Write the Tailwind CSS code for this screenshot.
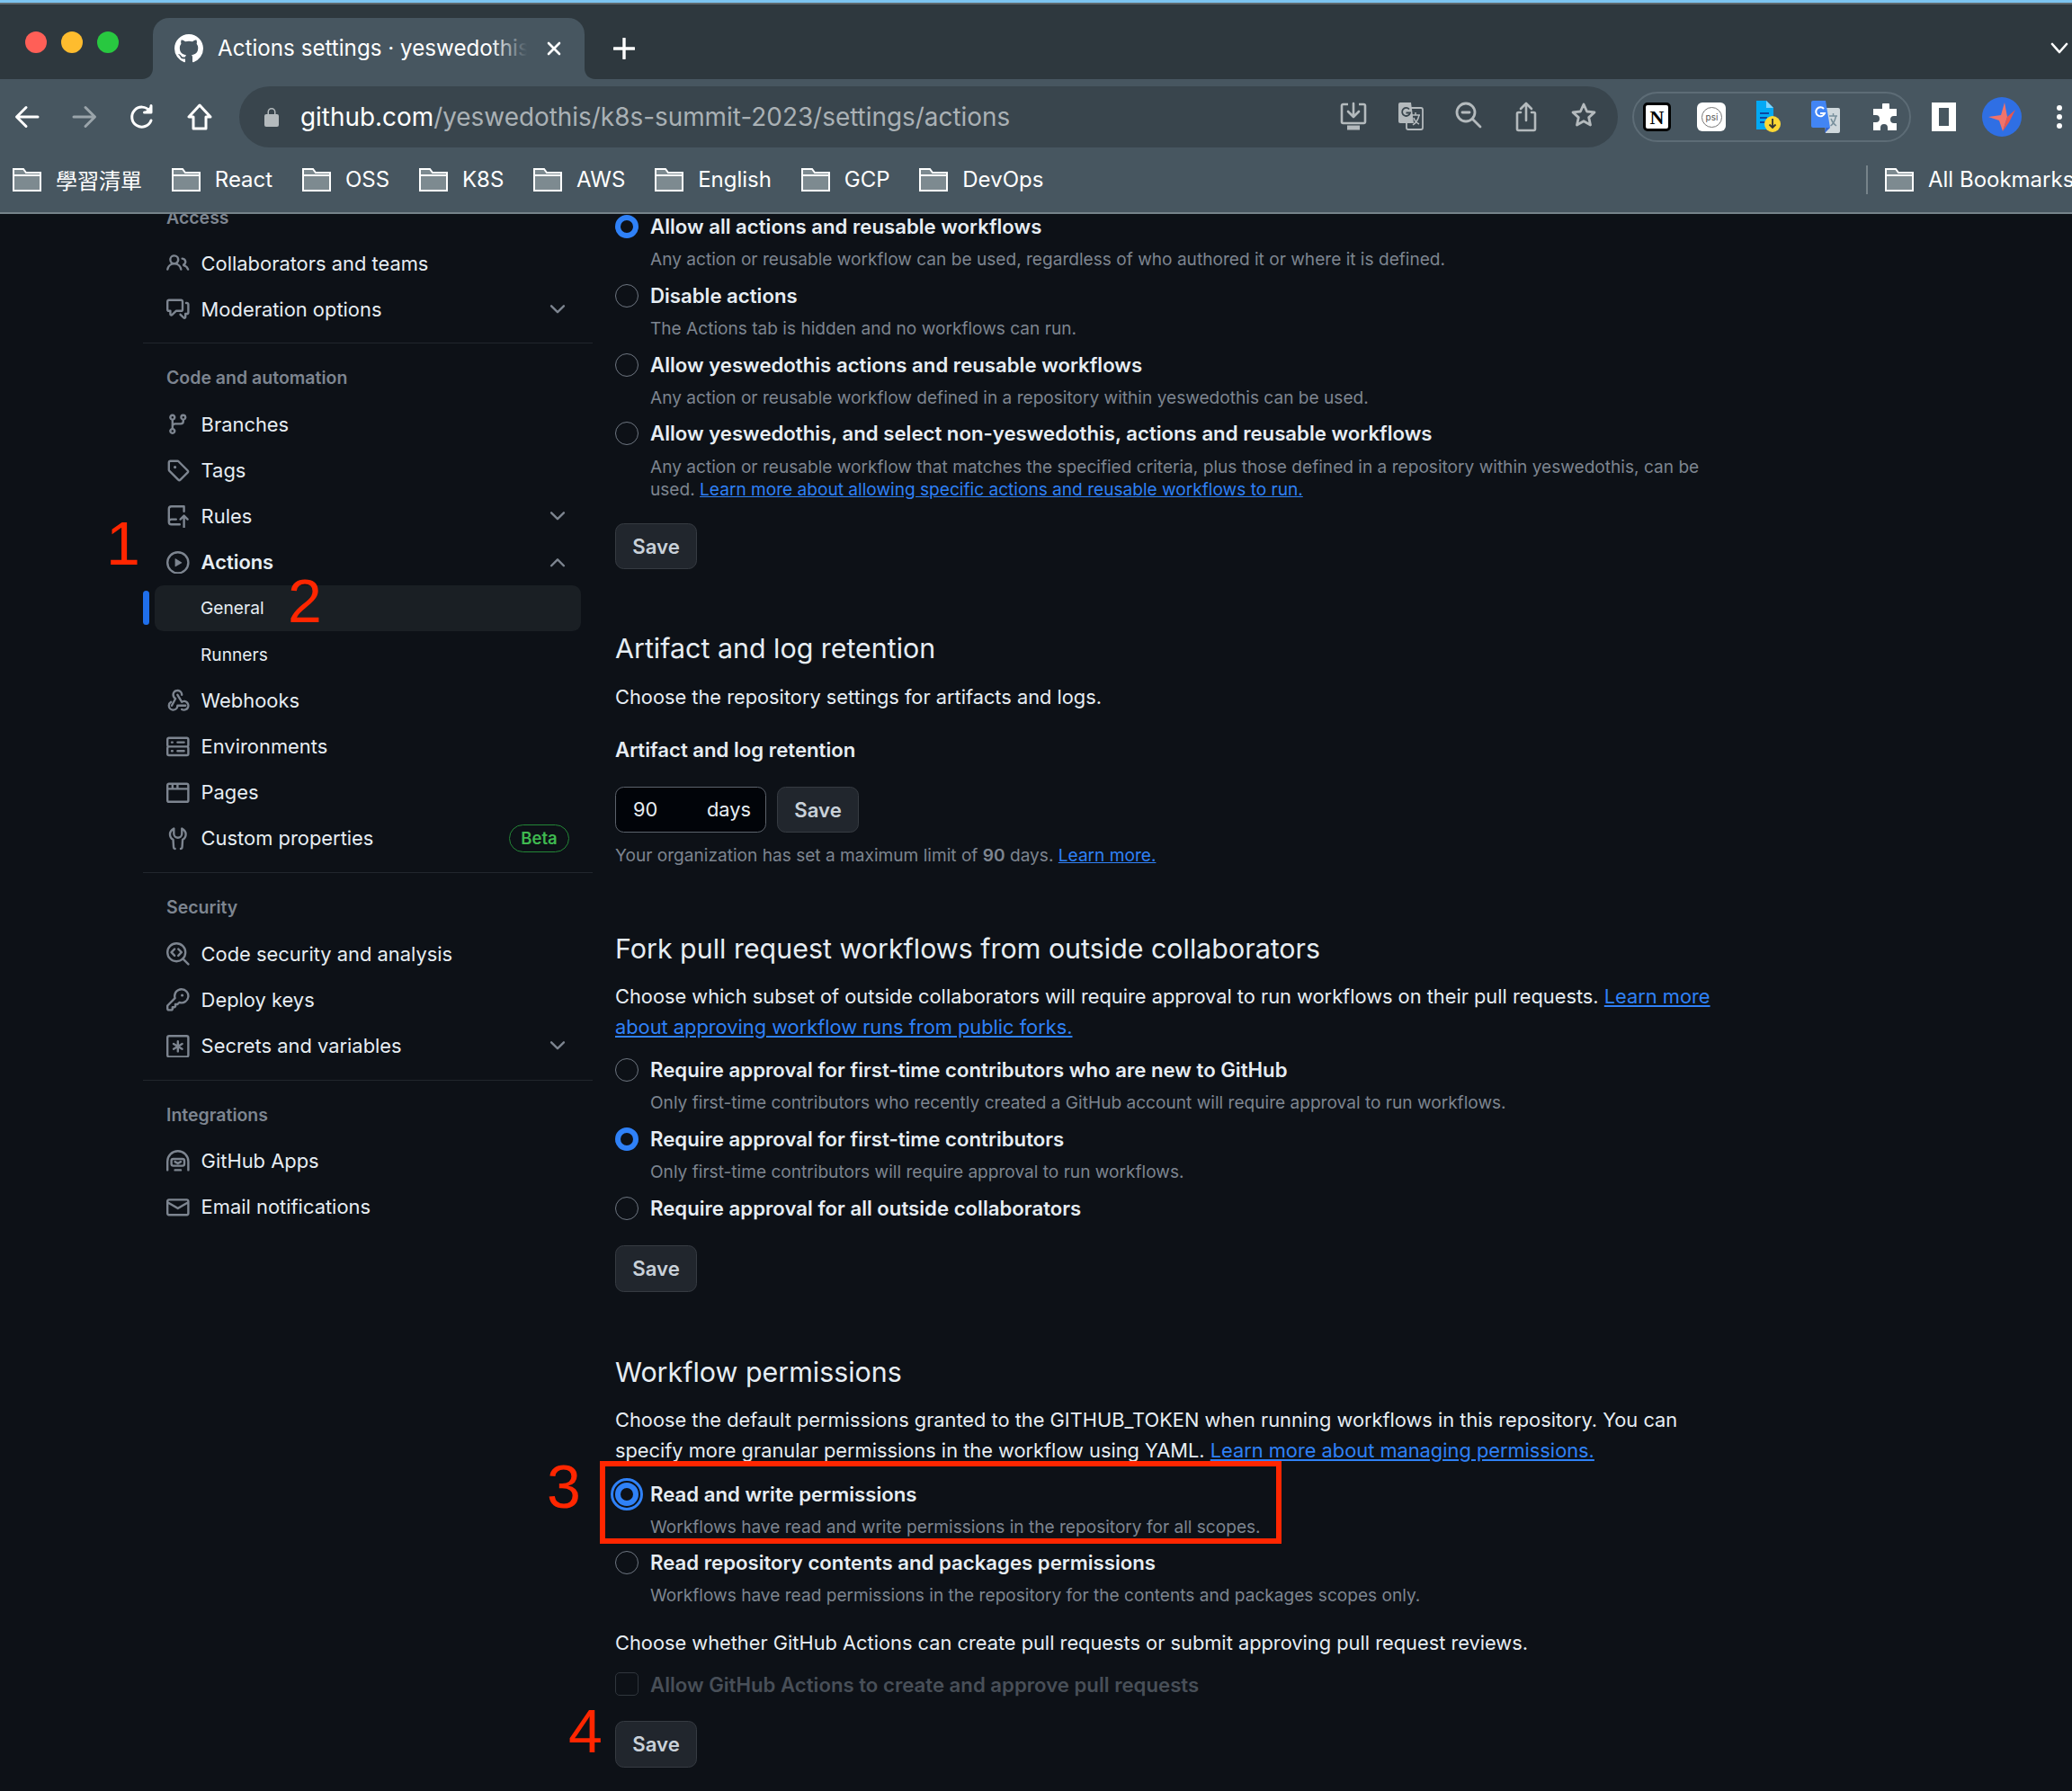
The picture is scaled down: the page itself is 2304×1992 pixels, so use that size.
<!DOCTYPE html>
<html lang="en">
<head>
    <meta charset="UTF-8">
    <title>Actions settings</title>
    <script src="https://cdn.jsdelivr.net/npm/@tailwindcss/browser@4"></script>
</head>
<body class="bg-[#0d1117]">
<div class="relative w-[2304px] h-[1992px] overflow-hidden font-['Inter','Noto_Sans_CJK_TC',sans-serif] text-[#e6edf3]">

    <!-- browser chrome -->
    <header class="relative z-10 h-[238px] bg-[#475660] border-b-2 border-[#76838a]">
        <div class="h-[3px] bg-[#7cc4f0]"></div>
        <div class="h-[2px] bg-[#5d676c]"></div>

        <!-- tab strip -->
        <div class="h-[83px] bg-[#2e383e] flex relative">
            <div class="flex items-center gap-[16px] pl-[28px] h-[83px] w-[170px]">
                <span class="w-[24px] h-[24px] rounded-full bg-[#ff5f57]"></span>
                <span class="w-[24px] h-[24px] rounded-full bg-[#febc2e]"></span>
                <span class="w-[24px] h-[24px] rounded-full bg-[#28c840]"></span>
            </div>
            <div class="relative mt-[15px] w-[480px] h-[68px] bg-[#475660] rounded-t-[18px] flex items-center pl-[24px]">
                <svg class="absolute left-[-12px] bottom-0 w-[12px] h-[12px]" viewBox="0 0 12 12"><path d="M12 0v12H0C7 12 12 7 12 0Z" fill="#475660"/></svg>
                <svg class="absolute right-[-12px] bottom-0 w-[12px] h-[12px]" viewBox="0 0 12 12"><path d="M0 0v12h12C5 12 0 7 0 0Z" fill="#475660"/></svg>
                <svg class="w-[32px] h-[32px] shrink-0" viewBox="0 0 16 16" fill="#ffffff"><path d="M8 0c4.42 0 8 3.58 8 8a8.013 8.013 0 0 1-5.45 7.59c-.4.08-.55-.17-.55-.38 0-.27.01-1.13.01-2.2 0-.75-.25-1.23-.54-1.48 1.78-.2 3.65-.88 3.65-3.95 0-.88-.31-1.59-.82-2.15.08-.2.36-1.02-.08-2.12 0 0-.67-.22-2.2.82-.64-.18-1.32-.27-2-.27-.68 0-1.36.09-2 .27-1.53-1.03-2.2-.82-2.2-.82-.44 1.1-.16 1.92-.08 2.12-.51.56-.82 1.28-.82 2.15 0 3.06 1.86 3.75 3.64 3.95-.23.2-.44.55-.51 1.07-.46.21-1.61.55-2.33-.66-.15-.24-.6-.83-1.23-.82-.67.01-.27.38.01.53.34.19.73.9.82 1.13.16.45.68 1.31 2.69.94 0 .67.01 1.3.01 1.49 0 .21-.15.45-.55.38A7.995 7.995 0 0 1 0 8c0-4.42 3.58-8 8-8Z"/></svg>
                <div class="relative ml-[16px] w-[344px] overflow-hidden whitespace-nowrap text-[24.200px] text-white">Actions settings · yeswedothis<span class="absolute right-0 top-0 w-[40px] h-full bg-linear-to-r from-transparent to-[#475660]"></span></div>
                <svg class="ml-[20px] w-[20px] h-[20px] shrink-0" viewBox="0 0 20 20" stroke="#ffffff" stroke-width="2.6" stroke-linecap="round"><path d="M4 4l12 12M16 4L4 16"/></svg>
            </div>
            <svg class="ml-[32px] mt-[37px] w-[24px] h-[24px]" viewBox="0 0 24 24" stroke="#ffffff" stroke-width="3.4" stroke-linecap="round"><path d="M12 1v22M1 12h22"/></svg>
            <svg class="ml-auto mr-[4px] mt-[42px] w-[20px] h-[14px]" viewBox="0 0 20 14" fill="none" stroke="#ffffff" stroke-width="2.6" stroke-linecap="round" stroke-linejoin="round"><path d="M2 2l8 9 8-9"/></svg>
        </div>

        <!-- address row -->
        <div class="h-[84px] pt-[8px] flex">
            <div class="flex ml-[-2px] h-[68px]">
                <div class="w-[64px] flex items-center justify-center"><svg class="w-[28px] h-[28px]" viewBox="0 0 28 28" fill="none" stroke="#ffffff" stroke-width="3" stroke-linecap="round" stroke-linejoin="round"><path d="M26 14H3M13 3.5 2.5 14 13 24.5"/></svg></div>
                <div class="w-[64px] flex items-center justify-center"><svg class="w-[28px] h-[28px]" viewBox="0 0 28 28" fill="none" stroke="#9aa4aa" stroke-width="3" stroke-linecap="round" stroke-linejoin="round"><path d="M2 14h23M15 3.5 25.5 14 15 24.5"/></svg></div>
                <div class="w-[64px] flex items-center justify-center"><svg class="w-[30px] h-[30px]" viewBox="0 0 30 30" fill="none" stroke="#ffffff" stroke-width="3" stroke-linecap="round" stroke-linejoin="round"><path d="M25 19a11 11 0 1 1-1.5-10.5"/><path d="M25 2.5v7.5h-7.5" fill="#ffffff"/></svg></div>
                <div class="w-[64px] flex items-center justify-center"><svg class="w-[28px] h-[30px]" viewBox="0 0 28 30" fill="none" stroke="#ffffff" stroke-width="3" stroke-linejoin="round"><path d="M14 2 2 15h5v13h14V15h5Z"/></svg></div>
            </div>
            <div class="ml-[12px] w-[1533px] h-[68px] rounded-full bg-[#39454d] flex items-center">
                <svg class="ml-[28px] w-[16px] h-[22px] shrink-0" viewBox="0 0 16 22" fill="#b4babd"><path d="M3.5 8V5.5a4.5 4.5 0 0 1 9 0V8H11V5.5a3 3 0 0 0-6 0V8Z"/><rect y="8" width="16" height="14" rx="2"/></svg>
                <div class="ml-[24px] pt-[2px] text-[27.900px] whitespace-nowrap text-[#aab1b5]"><span class="text-white">github.com</span>/yeswedothis/k8s-summit-2023/settings/actions</div>
                <div class="ml-auto mr-[6px] flex">
                    <div class="w-[64px] flex justify-center"><svg class="w-[30px] h-[32px]" viewBox="0 0 30 32" fill="none" stroke="#b4babd" stroke-width="2.6"><path d="M9 3H3.5A1.5 1.5 0 0 0 2 4.5v18A1.5 1.5 0 0 0 3.5 24h23a1.5 1.5 0 0 0 1.5-1.500V4.500A1.500 1.500 0 0 0 26.500 3H21"/><path d="M15 2v14M9 11l6 6 6-6" stroke-linecap="round" stroke-linejoin="round"/><path d="M8 29h14" stroke-width="5"/></svg></div>
                    <div class="w-[64px] flex justify-center"><svg class="w-[28px] h-[32px]" viewBox="0 0 28 32"><rect x="9" y="7" width="18" height="24" rx="2" fill="none" stroke="#b4babd" stroke-width="1.800"/><path d="M2 1h12l3 23H2a2 2 0 0 1-2-2V3a2 2 0 0 1 2-2Z" fill="#b4babd"/><path d="M12 8.500a4.500 4.500 0 1 0 1 4H8.500" fill="none" stroke="#39454d" stroke-width="1.800"/><path d="M15 15h9M19 12v3M23 15c-1 5-4 9-7 11M17 18c1 3 4 6 6 7" fill="none" stroke="#b4babd" stroke-width="1.500"/></svg></div>
                    <div class="w-[64px] flex justify-center"><svg class="w-[30px] h-[30px]" viewBox="0 0 30 30" fill="none" stroke="#b4babd" stroke-width="2.800" stroke-linecap="round"><circle cx="12" cy="12" r="10"/><path d="M8 12h8M20 20l8 8"/></svg></div>
                    <div class="w-[64px] flex justify-center"><svg class="w-[24px] h-[34px]" viewBox="0 0 24 34" fill="none" stroke="#b4babd" stroke-width="2.600" stroke-linecap="round" stroke-linejoin="round"><path d="M6 12H3.500A1.500 1.500 0 0 0 2 13.500v17A1.500 1.500 0 0 0 3.500 32h17a1.500 1.500 0 0 0 1.500-1.500v-17a1.500 1.500 0 0 0-1.500-1.500H18"/><path d="M12 21V2M6 8l6-6 6 6"/></svg></div>
                    <div class="w-[64px] flex justify-center"><svg class="w-[30px] h-[30px]" viewBox="0 0 30 30" fill="none" stroke="#b4babd" stroke-width="2.800" stroke-linejoin="round"><path d="m15 3 3.600 8 8.400.9-6.300 5.700 1.800 8.400L15 21.700 7.500 26l1.800-8.400L3 11.900l8.400-.9Z"/></svg></div>
                </div>
            </div>

            <!-- extensions -->
            <div class="ml-[16px] mt-[6px] w-[310px] h-[56px] rounded-full border-2 border-[#5d6c76] flex items-center">
                <div class="ml-[-5px] w-[62px] flex justify-center"><div class="w-[31px] h-[32px] bg-white border-[3px] border-black rounded-[5px] flex items-center justify-center font-['Liberation_Serif',serif] font-bold text-[22px] text-black">N</div></div>
                <div class="w-[62px] flex justify-center"><div class="w-[32px] h-[32px] bg-white rounded-[6px] flex items-center justify-center"><div class="w-[23px] h-[23px] rounded-full border border-[#777777] flex items-center justify-center text-[10px] text-[#555555]">psi</div></div></div>
                <div class="w-[66px] flex justify-center"><svg class="w-[30px] h-[36px]" viewBox="0 0 30 36"><path d="M2 0h11l8 8v24H2Z" fill="#03a9f4"/><path d="M13 0l8 8h-8Z" fill="#81d4fa"/><path d="M6 14h10M6 19h8M6 24h6" stroke="#0d47a1" stroke-width="2"/><circle cx="20" cy="26" r="9" fill="#fdd835"/><path d="M20 20v10M16.500 26.500l3.500 3.500 3.500-3.500" fill="none" stroke="#333333" stroke-width="1.800"/></svg></div>
                <div class="w-[64px] flex justify-center"><svg class="w-[32px] h-[36px]" viewBox="0 0 32 36"><path d="M14 8h16a2 2 0 0 1 2 2v24a2 2 0 0 1-2 2H16Z" fill="#cfd8dc"/><path d="M2 0h14l5 30H2a2 2 0 0 1-2-2V2a2 2 0 0 1 2-2Z" fill="#4285f4"/><path d="M16 30h5l-6 6Z" fill="#3367d6"/><path d="M14 9a5 5 0 1 0 1 5H10" fill="none" stroke="#ffffff" stroke-width="2"/><path d="M20 17h9M24.500 14v3M27.500 17c-1 5-3 9-6 11M22 20c1 3 3 6 6 8" fill="none" stroke="#78909c" stroke-width="1.500"/></svg></div>
                <div class="ml-[10px] w-[52px] flex justify-center"><svg class="w-[28px] h-[30px]" viewBox="0 0 28 30" fill="#ffffff"><path d="M10 2a4 4 0 0 1 8 0v4h8v8h-3a4 4 0 0 0 0 8h3v8H16v-3a4 4 0 0 0-8 0v3H0v-9h3a4 4 0 0 0 0-8H0V6h10Z"/></svg></div>
            </div>
            <div class="ml-[23px] mt-[18px] w-[27px] h-[32px] border-[6px] border-white border-r-[8px] border-l-[8px] bg-[#475660]"></div>
            <div class="ml-[29px] mt-[12px] w-[44px] h-[44px] rounded-full bg-[#2f6fe4] flex items-center justify-center"><svg class="w-[34px] h-[36px]" viewBox="0 0 34 36"><path d="M20 2l3 16-5 16-4-12L2 18l14-2Z" fill="#f0736a"/><path d="M23 18l9-8-7 14-7 10Z" fill="#e8564e"/></svg></div>
            <div class="ml-[39px] mt-[21px] flex flex-col gap-[4px]"><span class="w-[6px] h-[6px] rounded-full bg-white"></span><span class="w-[6px] h-[6px] rounded-full bg-white"></span><span class="w-[6px] h-[6px] rounded-full bg-white"></span></div>
        </div>

        <!-- bookmarks -->
        <div class="h-[64px] pb-[8px] flex items-center pl-[14px] text-[24px] text-white whitespace-nowrap gap-[32.800px]">
            <div class="flex items-center gap-[16px]"><svg class="w-[32px] h-[26px]" viewBox="0 0 32 26"><path d="M1 1h11l3 4h16v20H1Z" fill="#7d8a90" stroke="#ffffff" stroke-width="2"/><path d="M1 8h30" stroke="#ffffff" stroke-width="2"/></svg><span class="font-['Noto_Sans_CJK_TC',sans-serif]">學習清單</span></div>
            <div class="flex items-center gap-[16px]"><svg class="w-[32px] h-[26px]" viewBox="0 0 32 26"><path d="M1 1h11l3 4h16v20H1Z" fill="#7d8a90" stroke="#ffffff" stroke-width="2"/><path d="M1 8h30" stroke="#ffffff" stroke-width="2"/></svg>React</div>
            <div class="flex items-center gap-[16px]"><svg class="w-[32px] h-[26px]" viewBox="0 0 32 26"><path d="M1 1h11l3 4h16v20H1Z" fill="#7d8a90" stroke="#ffffff" stroke-width="2"/><path d="M1 8h30" stroke="#ffffff" stroke-width="2"/></svg>OSS</div>
            <div class="flex items-center gap-[16px]"><svg class="w-[32px] h-[26px]" viewBox="0 0 32 26"><path d="M1 1h11l3 4h16v20H1Z" fill="#7d8a90" stroke="#ffffff" stroke-width="2"/><path d="M1 8h30" stroke="#ffffff" stroke-width="2"/></svg>K8S</div>
            <div class="flex items-center gap-[16px]"><svg class="w-[32px] h-[26px]" viewBox="0 0 32 26"><path d="M1 1h11l3 4h16v20H1Z" fill="#7d8a90" stroke="#ffffff" stroke-width="2"/><path d="M1 8h30" stroke="#ffffff" stroke-width="2"/></svg>AWS</div>
            <div class="flex items-center gap-[16px]"><svg class="w-[32px] h-[26px]" viewBox="0 0 32 26"><path d="M1 1h11l3 4h16v20H1Z" fill="#7d8a90" stroke="#ffffff" stroke-width="2"/><path d="M1 8h30" stroke="#ffffff" stroke-width="2"/></svg>English</div>
            <div class="flex items-center gap-[16px]"><svg class="w-[32px] h-[26px]" viewBox="0 0 32 26"><path d="M1 1h11l3 4h16v20H1Z" fill="#7d8a90" stroke="#ffffff" stroke-width="2"/><path d="M1 8h30" stroke="#ffffff" stroke-width="2"/></svg>GCP</div>
            <div class="flex items-center gap-[16px]"><svg class="w-[32px] h-[26px]" viewBox="0 0 32 26"><path d="M1 1h11l3 4h16v20H1Z" fill="#7d8a90" stroke="#ffffff" stroke-width="2"/><path d="M1 8h30" stroke="#ffffff" stroke-width="2"/></svg>DevOps</div>
            <div class="ml-auto flex items-center gap-[16px] w-[229px]">
                <span class="w-[2px] h-[32px] bg-[#76838a] shrink-0 mr-[3px]"></span>
                <svg class="w-[32px] h-[26px] shrink-0" viewBox="0 0 32 26"><path d="M1 1h11l3 4h16v20H1Z" fill="#7d8a90" stroke="#ffffff" stroke-width="2"/><path d="M1 8h30" stroke="#ffffff" stroke-width="2"/></svg>All Bookmarks
            </div>
        </div>
    </header>

    <main class="flex h-[1754px] overflow-hidden">
        <!-- sidebar -->
        <nav class="ml-[159px] w-[500px] shrink-0 mt-[-34.500px] text-[21.900px]">
            <div class="h-[64px] pt-[24px] pl-[26px] leading-[28px] text-[19.500px] font-semibold text-[#7d8590]">Access</div>
            <a class="h-[51.200px] flex items-center pl-[26px] gap-[13px]"><svg class="w-[25.600px] h-[25.600px]" viewBox="0 0 16 16" fill="#7d8590"><path d="M2 5.500a3.500 3.500 0 1 1 5.898 2.549 5.508 5.508 0 0 1 3.034 4.084.75.75 0 1 1-1.482.235 4 4 0 0 0-7.9 0 .75.75 0 0 1-1.482-.236A5.507 5.507 0 0 1 3.102 8.050 3.493 3.493 0 0 1 2 5.500ZM11 4a3.001 3.001 0 0 1 2.220 5.018 5.010 5.010 0 0 1 2.560 3.012.749.749 0 0 1-.885.954.752.752 0 0 1-.549-.514 3.507 3.507 0 0 0-2.522-2.372.75.75 0 0 1-.574-.73v-.352a.75.75 0 0 1 .416-.672A1.500 1.500 0 0 0 11 5.500.75.75 0 0 1 11 4Zm-5.500-.5a2 2 0 1 0-.001 3.999A2 2 0 0 0 5.500 3.500Z"/></svg>Collaborators and teams</a>
            <a class="h-[51.200px] flex items-center pl-[26px] gap-[13px]"><svg class="w-[25.600px] h-[25.600px]" viewBox="0 0 16 16" fill="#7d8590"><path d="M1.750 1h8.500c.966 0 1.750.784 1.750 1.750v5.500A1.750 1.750 0 0 1 10.250 10H7.061l-2.574 2.573A1.458 1.458 0 0 1 2 11.543V10h-.25A1.750 1.750 0 0 1 0 8.250v-5.500C0 1.784.784 1 1.750 1ZM1.500 2.750v5.500c0 .138.112.25.25.25h1a.75.75 0 0 1 .75.75v2.190l2.720-2.720a.749.749 0 0 1 .53-.22h3.500a.25.25 0 0 0 .25-.25v-5.500a.25.25 0 0 0-.25-.25h-8.500a.25.25 0 0 0-.25.25Zm13 2a.25.25 0 0 0-.25-.25h-.5a.75.75 0 0 1 0-1.500h.5c.966 0 1.750.784 1.750 1.750v5.500A1.750 1.750 0 0 1 14.250 12H14v1.543a1.458 1.458 0 0 1-2.487 1.030L9.220 12.280a.749.749 0 0 1 .326-1.275.749.749 0 0 1 .734.215l2.220 2.220v-2.190a.75.75 0 0 1 .75-.75h1a.25.25 0 0 0 .25-.25Z"/></svg>Moderation options<svg class="ml-auto mr-[26px] w-[26px] h-[26px]" viewBox="0 0 16 16" fill="#7d8590"><path d="M12.780 5.220a.749.749 0 0 1 0 1.060l-4.250 4.250a.749.749 0 0 1-1.060 0L3.220 6.280a.749.749 0 1 1 1.060-1.060L8 8.939l3.720-3.719a.749.749 0 0 1 1.060 0Z"/></svg></a>
            <div class="mt-[11px] h-[1.600px] bg-[#21262d]"></div>

            <div class="h-[64px] pt-[24px] pl-[26px] leading-[28px] text-[19.500px] font-semibold text-[#7d8590]">Code and automation</div>
            <a class="h-[51.200px] flex items-center pl-[26px] gap-[13px]"><svg class="w-[25.600px] h-[25.600px]" viewBox="0 0 16 16" fill="#7d8590"><path d="M9.500 3.250a2.250 2.250 0 1 1 3 2.122V6A2.500 2.500 0 0 1 10 8.500H6a1 1 0 0 0-1 1v1.128a2.251 2.251 0 1 1-1.500 0V5.372a2.250 2.250 0 1 1 1.500 0v1.836A2.493 2.493 0 0 1 6 7h4a1 1 0 0 0 1-1v-.628A2.250 2.250 0 0 1 9.500 3.250Zm-6 0a.75.75 0 1 0 1.500 0 .75.75 0 0 0-1.500 0Zm8.250-.75a.75.75 0 1 0 0 1.500.75.75 0 0 0 0-1.500ZM4.250 12a.75.75 0 1 0 0 1.500.75.75 0 0 0 0-1.500Z"/></svg>Branches</a>
            <a class="h-[51.200px] flex items-center pl-[26px] gap-[13px]"><svg class="w-[25.600px] h-[25.600px]" viewBox="0 0 16 16" fill="#7d8590"><path d="M1 7.775V2.750C1 1.784 1.784 1 2.750 1h5.025c.464 0 .91.184 1.238.513l6.250 6.250a1.750 1.750 0 0 1 0 2.474l-5.026 5.026a1.750 1.750 0 0 1-2.474 0l-6.250-6.250A1.752 1.752 0 0 1 1 7.775Zm1.500 0c0 .066.026.13.073.177l6.250 6.250a.25.25 0 0 0 .354 0l5.025-5.025a.25.25 0 0 0 0-.354l-6.250-6.250a.25.25 0 0 0-.177-.073H2.750a.25.25 0 0 0-.25.25ZM6 5a1 1 0 1 1 0 2 1 1 0 0 1 0-2Z"/></svg>Tags</a>
            <a class="h-[51.200px] flex items-center pl-[26px] gap-[13px]"><svg class="w-[25.600px] h-[25.600px]" viewBox="0 0 16 16" fill="#7d8590"><path d="M1 2.500A2.500 2.500 0 0 1 3.500 0h8.750a.75.75 0 0 1 .75.75v3.500a.75.75 0 0 1-1.500 0V1.500h-8a1 1 0 0 0-1 1v6.708A2.493 2.493 0 0 1 3.500 9h3.250a.75.75 0 0 1 0 1.500H3.500a1 1 0 0 0 0 2h5.750a.75.75 0 0 1 0 1.500H3.500A2.500 2.500 0 0 1 1 11.500Zm13.230 7.790h-.001l-1.224-1.224v6.184a.75.75 0 0 1-1.500 0V9.066L10.280 10.290a.75.75 0 0 1-1.060-1.061l2.505-2.504a.75.75 0 0 1 1.060 0L15.290 9.230a.751.751 0 0 1-.018 1.042.751.751 0 0 1-1.042.018Z"/></svg>Rules<svg class="ml-auto mr-[26px] w-[26px] h-[26px]" viewBox="0 0 16 16" fill="#7d8590"><path d="M12.780 5.220a.749.749 0 0 1 0 1.060l-4.250 4.250a.749.749 0 0 1-1.060 0L3.220 6.280a.749.749 0 1 1 1.060-1.060L8 8.939l3.720-3.719a.749.749 0 0 1 1.060 0Z"/></svg></a>
            <a class="h-[51.200px] flex items-center pl-[26px] gap-[13px] font-semibold"><svg class="w-[25.600px] h-[25.600px]" viewBox="0 0 16 16" fill="#7d8590"><path d="M8 0a8 8 0 1 1 0 16A8 8 0 0 1 8 0ZM1.500 8a6.500 6.500 0 1 0 13 0 6.500 6.500 0 0 0-13 0Zm4.879-2.773 4.264 2.559a.25.25 0 0 1 0 .428l-4.264 2.559A.25.25 0 0 1 6 10.559V5.442a.25.25 0 0 1 .379-.215Z"/></svg>Actions<svg class="ml-auto mr-[26px] w-[26px] h-[26px]" viewBox="0 0 16 16" fill="#7d8590"><path d="M3.220 10.530a.749.749 0 0 1 0-1.060l4.250-4.250a.749.749 0 0 1 1.060 0l4.250 4.250a.749.749 0 1 1-1.060 1.060L8 6.811 4.280 10.530a.749.749 0 0 1-1.060 0Z"/></svg></a>
            <div class="relative h-[51.200px]">
                <span class="absolute left-0 top-[6px] w-[7px] h-[38px] rounded-full bg-[#1f6feb]"></span>
                <a class="ml-[13px] w-[474px] h-[51.200px] rounded-[9.600px] bg-[#1a1f24] flex items-center pl-[51px] text-[19.200px]">General</a>
            </div>
            <a class="h-[51.200px] flex items-center pl-[64px] text-[19.200px]">Runners</a>
            <a class="h-[51.200px] flex items-center pl-[26px] gap-[13px]"><svg class="w-[25.600px] h-[25.600px]" viewBox="0 0 16 16" fill="#7d8590"><path d="M5.500 4.250a2.250 2.250 0 0 1 4.500 0 .75.75 0 0 0 1.500 0 3.750 3.750 0 1 0-6.140 2.889l-2.272 4.258a.75.75 0 0 0 1.324.706L7 7.250a.75.75 0 0 0-.309-1.015A2.250 2.250 0 0 1 5.500 4.250Z"/><path d="M7.364 3.607a.75.75 0 0 1 1.030.257l2.608 4.349a3.750 3.750 0 1 1-.628 6.785.75.75 0 0 1 .752-1.299 2.250 2.250 0 1 0-.033-3.880.75.75 0 0 1-1.030-.256L7.107 4.636a.75.75 0 0 1 .257-1.030Z"/><path d="M2.500 11.750a2.250 2.250 0 0 0 4.500 0 .75.75 0 0 1 .75-.75h5.500a.75.75 0 0 1 0 1.500H8.425A3.751 3.751 0 0 1 1 11.750a3.750 3.750 0 0 1 1.800-3.200.75.75 0 0 1 .8 1.270 2.250 2.250 0 0 0-1.100 1.930Z"/></svg>Webhooks</a>
            <a class="h-[51.200px] flex items-center pl-[26px] gap-[13px]"><svg class="w-[25.600px] h-[25.600px]" viewBox="0 0 16 16" fill="#7d8590"><path d="M1.750 1h12.500c.966 0 1.750.784 1.750 1.750v4c0 .372-.116.717-.314 1 .198.283.314.628.314 1v4a1.750 1.750 0 0 1-1.750 1.750H1.750A1.750 1.750 0 0 1 0 12.750v-4c0-.372.116-.717.314-1a1.739 1.739 0 0 1-.314-1v-4C0 1.784.784 1 1.750 1ZM1.500 2.750v4c0 .138.112.25.25.25h12.500a.25.25 0 0 0 .25-.25v-4a.25.25 0 0 0-.25-.25H1.750a.25.25 0 0 0-.25.25Zm.25 5.750a.25.25 0 0 0-.25.25v4c0 .138.112.25.25.25h12.500a.25.25 0 0 0 .25-.25v-4a.25.25 0 0 0-.25-.25ZM7 4.750A.75.75 0 0 1 7.750 4h4.500a.75.75 0 0 1 0 1.500h-4.500A.75.75 0 0 1 7 4.750ZM7.750 10h4.500a.75.75 0 0 1 0 1.500h-4.500a.75.75 0 0 1 0-1.500ZM3 4.750A.75.75 0 0 1 3.750 4h.5a.75.75 0 0 1 0 1.500h-.5A.75.75 0 0 1 3 4.750ZM3.750 10h.5a.75.75 0 0 1 0 1.500h-.5a.75.75 0 0 1 0-1.500Z"/></svg>Environments</a>
            <a class="h-[51.200px] flex items-center pl-[26px] gap-[13px]"><svg class="w-[25.600px] h-[25.600px]" viewBox="0 0 16 16" fill="#7d8590"><path d="M0 2.750C0 1.784.784 1 1.750 1h12.500c.966 0 1.750.784 1.750 1.750v10.500A1.750 1.750 0 0 1 14.250 15H1.750A1.750 1.750 0 0 1 0 13.250ZM14.500 6h-13v7.250c0 .138.112.25.25.25h12.500a.25.25 0 0 0 .25-.25Zm-6-3.500v2h6v-1.750a.25.25 0 0 0-.25-.25ZM5 2.500v2h2v-2Zm-3.250 0a.25.25 0 0 0-.25.25V4.500h2v-2Z"/></svg>Pages</a>
            <a class="h-[51.200px] flex items-center pl-[26px] gap-[13px]"><svg class="w-[25.600px] h-[25.600px]" viewBox="0 0 16 16" fill="none" stroke="#7d8590" stroke-width="1.500" stroke-linecap="round" stroke-linejoin="round"><path d="M5.200 1C3.700 1.800 2.500 3.300 2.500 5c0 1.700.9 3 2.200 3.700l.3 4.800c0 .9.4 1.500 1 1.500M10.800 1c1.500.8 2.700 2.300 2.700 4 0 1.700-.9 3-2.200 3.700l-.3 4.800c0 .9-.4 1.500-1 1.500M5.200 1v3.500a2.800 2.800 0 0 0 5.600 0V1"/></svg>Custom properties<span class="ml-auto mr-[26px] w-[67px] h-[31px] rounded-full border-[1.600px] border-[#238636] text-[#3fb950] text-[18.500px] font-semibold flex items-center justify-center">Beta</span></a>
            <div class="mt-[11.500px] h-[1.600px] bg-[#21262d]"></div>

            <div class="h-[64px] pt-[24px] pl-[26px] leading-[28px] text-[19.500px] font-semibold text-[#7d8590]">Security</div>
            <a class="h-[51.200px] flex items-center pl-[26px] gap-[13px]"><svg class="w-[25.600px] h-[25.600px]" viewBox="0 0 16 16" fill="none" stroke="#7d8590" stroke-width="1.500" stroke-linecap="round" stroke-linejoin="round"><circle cx="7" cy="7" r="6.250"/><path d="M11.500 11.500l3.750 3.750M5.700 4.700 3.500 7l2.200 2.300M8.300 4.700 10.500 7 8.300 9.300"/></svg>Code security and analysis</a>
            <a class="h-[51.200px] flex items-center pl-[26px] gap-[13px]"><svg class="w-[25.600px] h-[25.600px]" viewBox="0 0 16 16" fill="#7d8590"><path d="M10.500 0a5.499 5.499 0 1 1-1.288 10.848l-.932.932a.749.749 0 0 1-.53.22H7v.75a.749.749 0 0 1-.22.53l-.5.5a.749.749 0 0 1-.53.22H5v.75a.749.749 0 0 1-.22.53l-.5.5a.749.749 0 0 1-.53.22h-2A1.750 1.750 0 0 1 0 14.250v-2c0-.199.079-.389.22-.53l4.932-4.932A5.500 5.500 0 0 1 10.500 0Zm-4 5.500c-.001.431.069.86.205 1.269a.75.75 0 0 1-.181.768L1.500 12.560v1.690c0 .138.112.25.25.25h1.690l.06-.06v-1.190a.75.75 0 0 1 .75-.75h1.190l.06-.06v-1.190a.75.75 0 0 1 .75-.75h1.190l1.023-1.025a.75.75 0 0 1 .768-.18A4 4 0 1 0 6.500 5.500ZM11 6a1 1 0 1 1 0-2 1 1 0 0 1 0 2Z"/></svg>Deploy keys</a>
            <a class="h-[51.200px] flex items-center pl-[26px] gap-[13px]"><svg class="w-[25.600px] h-[25.600px]" viewBox="0 0 16 16" fill="none" stroke="#7d8590" stroke-width="1.500" stroke-linecap="round"><rect x=".75" y=".75" width="14.500" height="14.500" rx="1.200"/><path d="M8 4.500v7M5 6.200l6 3.600M11 6.200 5 9.800"/></svg>Secrets and variables<svg class="ml-auto mr-[26px] w-[26px] h-[26px]" viewBox="0 0 16 16" fill="#7d8590"><path d="M12.780 5.220a.749.749 0 0 1 0 1.060l-4.250 4.250a.749.749 0 0 1-1.060 0L3.220 6.280a.749.749 0 1 1 1.060-1.060L8 8.939l3.720-3.719a.749.749 0 0 1 1.060 0Z"/></svg></a>
            <div class="mt-[11.500px] h-[1.600px] bg-[#21262d]"></div>

            <div class="h-[64px] pt-[24px] pl-[26px] leading-[28px] text-[19.500px] font-semibold text-[#7d8590]">Integrations</div>
            <a class="h-[51.200px] flex items-center pl-[26px] gap-[13px]"><svg class="w-[25.600px] h-[25.600px]" viewBox="0 0 16 16" fill="none" stroke="#7d8590" stroke-width="1.500" stroke-linecap="round" stroke-linejoin="round"><path d="M.75 14V8a7.250 7.250 0 0 1 14.500 0v6"/><rect x="3.500" y="6.250" width="9" height="4.750" rx="1.300"/><path d="M6 8.200l2 1.200 2-1.200M6 14h4"/></svg>GitHub Apps</a>
            <a class="h-[51.200px] flex items-center pl-[26px] gap-[13px]"><svg class="w-[25.600px] h-[25.600px]" viewBox="0 0 16 16" fill="#7d8590"><path d="M1.750 2h12.500c.966 0 1.750.784 1.750 1.750v8.500A1.750 1.750 0 0 1 14.250 14H1.750A1.750 1.750 0 0 1 0 12.250v-8.500C0 2.784.784 2 1.750 2ZM1.500 12.251c0 .138.112.25.25.25h12.500a.25.25 0 0 0 .25-.25V5.809L8.380 9.397a.75.75 0 0 1-.76 0L1.500 5.809v6.442Zm13-8.181v-.32a.25.25 0 0 0-.25-.25H1.750a.25.25 0 0 0-.25.25v.32L8 7.880Z"/></svg>Email notifications</a>
        </nav>

        <!-- settings content -->
        <section class="ml-[25px] w-[1230px] mt-[-4px] text-[21.800px]">
            <div class="flex mb-[9.800px]">
                <span class="w-[26px] h-[26px] mt-[5px] rounded-full border-[6px] border-[#2f81f7] shrink-0"></span>
                <div class="ml-[13px]"><div class="h-[36px] leading-[36px] text-[22.200px] font-semibold">Allow all actions and reusable workflows</div><p class="pt-[5px] leading-[26px] text-[19.100px] text-[#7d8590]">Any action or reusable workflow can be used, regardless of who authored it or where it is defined.</p></div>
            </div>
            <div class="flex mb-[9.800px]">
                <span class="w-[26px] h-[26px] mt-[5px] rounded-full border-[1.600px] border-[#6e7681] shrink-0"></span>
                <div class="ml-[13px]"><div class="h-[36px] leading-[36px] text-[22.200px] font-semibold">Disable actions</div><p class="pt-[5px] leading-[26px] text-[19.100px] text-[#7d8590]">The Actions tab is hidden and no workflows can run.</p></div>
            </div>
            <div class="flex mb-[9.800px]">
                <span class="w-[26px] h-[26px] mt-[5px] rounded-full border-[1.600px] border-[#6e7681] shrink-0"></span>
                <div class="ml-[13px]"><div class="h-[36px] leading-[36px] text-[22.200px] font-semibold">Allow yeswedothis actions and reusable workflows</div><p class="pt-[5px] leading-[26px] text-[19.100px] text-[#7d8590]">Any action or reusable workflow defined in a repository within yeswedothis can be used.</p></div>
            </div>
            <div class="flex">
                <span class="w-[26px] h-[26px] mt-[5px] rounded-full border-[1.600px] border-[#6e7681] shrink-0"></span>
                <div class="ml-[13px]"><div class="h-[36px] leading-[36px] text-[22.200px] font-semibold">Allow yeswedothis, and select non-yeswedothis, actions and reusable workflows</div><p class="pt-[7px] leading-[25px] text-[19.100px] text-[#7d8590]">Any action or reusable workflow that matches the specified criteria, plus those defined in a repository within yeswedothis, can be used. <a class="text-[#2f81f7] underline">Learn more about allowing specific actions and reusable workflows to run.</a></p></div>
            </div>
            <button class="mt-[24.600px] block w-[91px] h-[51.200px] rounded-[9.600px] bg-[#21262d] border-[1.600px] border-[#363b42] text-[22.200px] font-semibold text-[#c9d1d9]">Save</button>

            <h2 class="mt-[65.500px] h-[45px] leading-[45px] text-[30.400px]">Artifact and log retention</h2>
            <p class="mt-[13.500px] h-[36px] leading-[36px]">Choose the repository settings for artifacts and logs.</p>
            <div class="mt-[23px] h-[36px] leading-[36px] text-[22.200px] font-semibold">Artifact and log retention</div>
            <div class="mt-[23px] flex gap-[12px]">
                <div class="w-[168px] h-[51.200px] rounded-[9.600px] bg-[#010409] border-[1.600px] border-[#5c626b] flex items-center justify-between pl-[19px] pr-[16px]"><span>90</span><span>days</span></div>
                <button class="w-[91px] h-[51.200px] rounded-[9.600px] bg-[#21262d] border-[1.600px] border-[#363b42] text-[22.200px] font-semibold text-[#c9d1d9]">Save</button>
            </div>
            <p class="mt-[12px] h-[26px] leading-[26px] text-[19.100px] text-[#7d8590]">Your organization has set a maximum limit of <b class="font-semibold">90</b> days. <a class="text-[#2f81f7] underline">Learn more.</a></p>

            <h2 class="mt-[68.500px] h-[45px] leading-[45px] text-[30.400px]">Fork pull request workflows from outside collaborators</h2>
            <p class="mt-[13.500px] leading-[34px]">Choose which subset of outside collaborators will require approval to run workflows on their pull requests. <a class="text-[#2f81f7] underline">Learn more about approving workflow runs from public forks.</a></p>
            <div class="flex mt-[13px] mb-[9.800px]">
                <span class="w-[26px] h-[26px] mt-[5px] rounded-full border-[1.600px] border-[#6e7681] shrink-0"></span>
                <div class="ml-[13px]"><div class="h-[36px] leading-[36px] text-[22.200px] font-semibold">Require approval for first-time contributors who are new to GitHub</div><p class="pt-[5px] leading-[26px] text-[19.100px] text-[#7d8590]">Only first-time contributors who recently created a GitHub account will require approval to run workflows.</p></div>
            </div>
            <div class="flex mb-[9.800px]">
                <span class="w-[26px] h-[26px] mt-[5px] rounded-full border-[6px] border-[#2f81f7] shrink-0"></span>
                <div class="ml-[13px]"><div class="h-[36px] leading-[36px] text-[22.200px] font-semibold">Require approval for first-time contributors</div><p class="pt-[5px] leading-[26px] text-[19.100px] text-[#7d8590]">Only first-time contributors will require approval to run workflows.</p></div>
            </div>
            <div class="flex">
                <span class="w-[26px] h-[26px] mt-[5px] rounded-full border-[1.600px] border-[#6e7681] shrink-0"></span>
                <div class="ml-[13px] h-[36px] leading-[36px] text-[22.200px] font-semibold">Require approval for all outside collaborators</div>
            </div>
            <button class="mt-[23.400px] block w-[91px] h-[51.200px] rounded-[9.600px] bg-[#21262d] border-[1.600px] border-[#363b42] text-[22.200px] font-semibold text-[#c9d1d9]">Save</button>

            <h2 class="mt-[67.500px] h-[45px] leading-[45px] text-[30.400px]">Workflow permissions</h2>
            <p class="mt-[12.500px] leading-[34px]">Choose the default permissions granted to the GITHUB_TOKEN when running workflows in this repository. You can specify more granular permissions in the workflow using YAML. <a class="text-[#2f81f7] underline">Learn more about managing permissions.</a></p>
            <div class="flex mt-[14px] mb-[9.800px]">
                <span class="w-[26px] h-[26px] mt-[5px] rounded-full border-[6px] border-[#2f81f7] outline-[3px] outline-offset-[2px] outline-[#2f81f7] shrink-0"></span>
                <div class="ml-[13px]"><div class="h-[36px] leading-[36px] text-[22.200px] font-semibold">Read and write permissions</div><p class="pt-[5px] leading-[26px] text-[19.100px] text-[#7d8590]">Workflows have read and write permissions in the repository for all scopes.</p></div>
            </div>
            <div class="flex">
                <span class="w-[26px] h-[26px] mt-[5px] rounded-full border-[1.600px] border-[#6e7681] shrink-0"></span>
                <div class="ml-[13px]"><div class="h-[36px] leading-[36px] text-[22.200px] font-semibold">Read repository contents and packages permissions</div><p class="pt-[5px] leading-[26px] text-[19.100px] text-[#7d8590]">Workflows have read permissions in the repository for the contents and packages scopes only.</p></div>
            </div>
            <p class="mt-[23px] leading-[34px]">Choose whether GitHub Actions can create pull requests or submit approving pull request reviews.</p>
            <div class="flex mt-[11px] h-[36px] items-center">
                <span class="w-[26px] h-[26px] rounded-[5px] border-[1.600px] border-[#30363d] shrink-0"></span>
                <div class="ml-[13px] text-[22.200px] font-semibold text-[#484f58]">Allow GitHub Actions to create and approve pull requests</div>
            </div>
            <button class="mt-[23px] block w-[91px] h-[51.200px] rounded-[9.600px] bg-[#21262d] border-[1.600px] border-[#363b42] text-[22.200px] font-semibold text-[#c9d1d9]">Save</button>
        </section>
    </main>

    <!-- red annotations on top of the screenshot -->
    <div class="absolute left-[667px] top-[1625px] w-[758px] h-[92px] border-[6px] border-[#ff2600]"></div>
    <span class="absolute left-[118px] top-[565px] leading-[78px] text-[68px] text-[#ff2600] font-['Liberation_Sans',sans-serif]">1</span>
    <span class="absolute left-[320px] top-[629px] leading-[78px] text-[68px] text-[#ff2600] font-['Liberation_Sans',sans-serif]">2</span>
    <span class="absolute left-[608px] top-[1614px] leading-[78px] text-[68px] text-[#ff2600] font-['Liberation_Sans',sans-serif]">3</span>
    <span class="absolute left-[632px] top-[1886px] leading-[78px] text-[68px] text-[#ff2600] font-['Liberation_Sans',sans-serif]">4</span>
</div>
</body>
</html>
